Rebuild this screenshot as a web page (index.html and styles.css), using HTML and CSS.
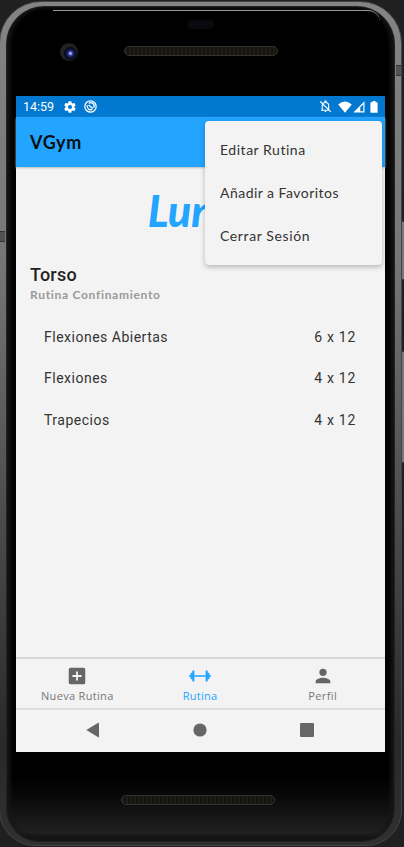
FILE: index.html
```html
<!DOCTYPE html>
<html lang="es">
<head>
<meta charset="utf-8">
<title>VGym</title>
<link rel="stylesheet" href="styles.css">
</head>
<body>
<div class="stage">
  <i class="side-key power"></i>
  <i class="side-key volume"></i>
  <div class="phone">
    <div class="bezel">
      <i class="rim-light"></i>
      <div class="forehead">
        <i class="sensor"></i>
        <i class="camera"></i>
        <i class="speaker"></i>
      </div>
      <div class="screen">
        <div class="statusbar">
          <span class="clock">14:59</span>
          <svg class="gear" width="14" height="14" viewBox="0 0 24 24"><path fill="#fff" d="M19.4 13a7.500 7.500 0 0 0 0-2l2.100-1.600a.5.5 0 0 0 .1-.6l-2-3.500a.5.5 0 0 0-.6-.2l-2.500 1a7.300 7.300 0 0 0-1.700-1l-.4-2.600a.5.5 0 0 0-.5-.5h-4a.5.5 0 0 0-.5.5L9 5.100a7.700 7.700 0 0 0-1.700 1l-2.500-1a.5.5 0 0 0-.6.200l-2 3.500a.5.5 0 0 0 .1.600L4.500 11a7.900 7.900 0 0 0 0 2l-2.200 1.600a.5.5 0 0 0-.1.600l2 3.500c.1.200.4.300.6.200l2.500-1a7.300 7.300 0 0 0 1.700 1l.4 2.600c0 .3.200.5.500.5h4c.3 0 .5-.2.5-.5l.4-2.600a7.700 7.700 0 0 0 1.700-1l2.500 1c.2.100.5 0 .6-.2l2-3.500a.5.500 0 0 0-.1-.6zM12 15.500a3.500 3.500 0 1 1 0-7 3.500 3.500 0 0 1 0 7z"/></svg>
          <svg class="sync" width="13" height="13" viewBox="0 0 13 13" fill="none" stroke="#fff"><circle cx="6.500" cy="6.500" r="5.700" stroke-width="1.200"/><path stroke-width="1.300" d="M3.300 5.200a3.400 3.400 0 0 0 5 4M9.700 7.800a3.400 3.400 0 0 0-5-4.400"/><path stroke-width="1.500" d="M4.600 5 8.800 8.500"/></svg>
          <span class="grow"></span>
          <svg class="bell" width="13" height="13" viewBox="0 0 13 13" fill="none" stroke="#fff" stroke-width="1.100"><path d="M3.300 10V5.700Q3.300 2.500 6.500 2.500T9.700 5.700V10M2 10.200h9M1.300 1.500l10.500 10.300"/><path fill="#fff" d="M6 1h1v1H6zM5.800 11.500h1.400"/></svg>
          <svg class="wifi" width="14" height="12" viewBox="0 0 14 12"><path fill="#fff" d="M.2 3.500Q7-2.500 13.800 3.500L7 11.700z"/></svg>
          <svg class="signal" width="12" height="12" viewBox="0 0 12 12"><path fill="#fff" fill-rule="evenodd" d="M11.500.3v11.200H.3zM10.300 3.200 7.300 6.200v4.100h3z"/></svg>
          <svg class="battery" width="8" height="12" viewBox="0 0 8 12"><path fill="#fff" d="M2.500 0h3v1.200H7q.6 0 .6.600v9.400q0 .6-.6.600H1q-.6 0-.6-.6V1.800q0-.6.6-.6h1.500z"/></svg>
        </div>
        <header class="appbar">VGym</header>
        <main class="content">
          <h1 class="day">Lunes</h1>
          <h2 class="group">Torso</h2>
          <p class="routine">Rutina Confinamiento</p>
          <ul class="exercises">
            <li><span>Flexiones Abiertas</span><span>6 x 12</span></li>
            <li><span>Flexiones</span><span>4 x 12</span></li>
            <li><span>Trapecios</span><span>4 x 12</span></li>
          </ul>
        </main>
        <nav class="tabs">
          <a class="tab"><svg width="22" height="22" viewBox="0 0 24 24"><path fill="#666" fill-rule="evenodd" d="M19 3H5a2 2 0 0 0-2 2v14a2 2 0 0 0 2 2h14a2 2 0 0 0 2-2V5a2 2 0 0 0-2-2zm-2 10h-4v4h-2v-4H7v-2h4V7h2v4h4z"/></svg><span class="label-new">Nueva Rutina</span></a>
          <a class="tab active"><svg width="22" height="22" viewBox="0 0 22 22"><path fill="#22a4ff" d="M0 10.300h1.500V8.500q0-.8.800-.8h1V6.200q0-.7.700-.7h.7q.7 0 .7.700v4.100h11.200V6.200q0-.7.700-.7h.7q.7 0 .7.700v1.500h1q.8 0 .8.800v1.800H22v1.400h-1.500v1.800q0 .8-.8.800h-1v1.500q0 .7-.7.700h-.7q-.7 0-.7-.7v-4.100H5.400v4.100q0 .7-.7.700H4q-.7 0-.7-.7v-1.500h-1q-.8 0-.8-.8v-1.800H0z"/></svg><span class="label-routine">Rutina</span></a>
          <a class="tab"><svg width="22" height="22" viewBox="0 0 24 24"><path fill="#666" d="M12 12a4 4 0 1 0 0-8 4 4 0 0 0 0 8zm0 2c-2.700 0-8 1.300-8 4v2h16v-2c0-2.700-5.300-4-8-4z"/></svg><span class="label-profile">Perfil</span></a>
        </nav>
        <div class="system-nav">
          <svg width="14" height="16" viewBox="0 0 14 16"><path fill="#666" d="M.3 8 12.300.8q.7-.3.700.5v13.400q0 .8-.7.500z"/></svg>
          <svg width="14" height="14" viewBox="0 0 14 14"><circle cx="7" cy="7" r="6.600" fill="#666"/></svg>
          <svg width="14" height="14" viewBox="0 0 14 14"><rect width="14" height="14" rx="1" fill="#666"/></svg>
        </div>
        <div class="menu">
          <span class="edit">Editar Rutina</span>
          <span class="favorite">Añadir a Favoritos</span>
          <span class="logout">Cerrar Sesión</span>
        </div>
      </div>
      <div class="chin"><i class="speaker"></i></div>
    </div>
  </div>
</div>
</body>
</html>
```
FILE: styles.css
```css
* { box-sizing: border-box; }
body { margin: 0; background: #202020; font-family: Roboto, sans-serif; }
.stage { position: relative; width: 404px; height: 847px; overflow: hidden; background: #202020; }
.side-key { position: absolute; right: 0; width: 3px; background: #777; border: 1px solid #3b3b3b; border-right: 0; }
.power { top: 221px; height: 59px; }
.volume { top: 351px; height: 112px; }
.phone {
  position: relative; width: 403px; height: 845px; margin: 1px 0 0 -1px; padding: 4px 6px 3px;
  border-radius: 42px 42px 36px 36px;
  background: linear-gradient(#858383, #777 30%, #4d4d4d 60%, #292929 88%, #303030);
  border: 1px solid #444;
}
.phone::before, .phone::after {
  content: ""; position: absolute; width: 5px; height: 9px; background: #525252;
  border: solid #333; border-width: 1px 0;
}
.phone::before { left: 0; top: 229px; }
.phone::after { right: 0; top: 63px; }
.bezel {
  position: relative; height: 836px; padding: 0 10px;
  border-radius: 38px 38px 33px 33px; border: 1px solid #222;
  background: linear-gradient(#000 0, #000 770px, #090909 790px, #202020 825px, #101010);
  box-shadow: inset 3px 0 4px #181818, inset -3px 0 4px #181818;
}
.rim-light {
  position: absolute; left: 46px; right: 14px; top: 3px; height: 12px;
  border-top: 1px solid #929e9e; border-radius: 0 22px 0 0;
}
.forehead { position: relative; height: 89px; }
.speaker {
  position: absolute; width: 154px; height: 10px; border: 1px solid #34332e; border-radius: 5px;
  background: repeating-linear-gradient(90deg, #1f1d18 0 2px, #14130f 2px 4px);
}
.forehead .speaker { left: 107px; top: 39px; }
.camera {
  position: absolute; left: 43px; top: 36px; width: 18px; height: 18px; border-radius: 50%;
  background: radial-gradient(circle at 58% 58%, #9dacef 0 1px, #3543a5 2px, #10133e 4px, #0b0c17 6px, #222 7px);
}
.sensor { position: absolute; left: 170px; top: 13px; width: 27px; height: 9px; border-radius: 5px; background: #090a0f; }
.screen {
  position: relative; width: 369px; height: 656px; margin-left: -1px;
  display: flex; flex-direction: column; background: #f3f3f3; color: #222;
}
.statusbar { height: 21px; padding: 0 7px 0 7px; display: flex; align-items: center; background: #0278d0; color: #fff; }
.clock { width: 32px; font-size: 12.5px; line-height: 21px; white-space: nowrap; }
.gear { margin-left: 8px; }
.sync { margin-left: 7px; }
.grow { flex: 1; }
.wifi { margin-left: 6px; }
.signal { margin-left: 1px; }
.battery { margin-left: 5px; }
.appbar {
  height: 50px; padding-left: 14px; background: #22a4ff; color: #0b1015;
  font: 700 18px/51px Lato, sans-serif; letter-spacing: .6px; box-shadow: 0 1px 2px #bbb;
}
.content { flex: 1; padding: 19px 14px 0; }
.day { margin: 0; text-align: center; font: italic 900 43px/49px Lato, sans-serif; color: #22a4ff; }
.group { margin: 28px 0 0; font: 500 18px/24px Roboto, sans-serif; letter-spacing: .2px; color: #222; }
.routine { margin: 0; font: 700 12px/15px Lato, sans-serif; letter-spacing: .7px; color: #999; }
.exercises { list-style: none; margin: 14px 0 0; padding: 0 14px; }
.exercises li { display: flex; justify-content: space-between; height: 41.4px; line-height: 42px; font-size: 14px; letter-spacing: .5px; color: #333; }
.exercises li span:last-child { padding-right: 1px; letter-spacing: .7px; }
.tabs {
  height: 53px; padding-right: 1px; display: grid; grid-template-columns: repeat(3, 1fr); border-top: 2px solid #d9d9d9; border-bottom: 2px solid #dedede;
}
.tab { display: flex; flex-direction: column; align-items: center; padding-top: 6px; color: #777; font: 11px/15px "Open Sans", sans-serif; white-space: nowrap; }
.tab span { margin-top: 1px; }
.tab.active { color: #22a4ff; }
.label-new { letter-spacing: .32px; }
.label-routine { letter-spacing: .25px; }
.label-profile { letter-spacing: .4px; }
.system-nav { height: 42px; padding: 0 71px 2px 70px; display: flex; align-items: center; justify-content: space-between; }
.menu {
  position: absolute; left: 189px; top: 25px; width: 177px; height: 144px; padding: 7px 15px;
  display: flex; flex-direction: column; background: #f3f3f3; border-radius: 4px; box-shadow: 0 2px 5px rgba(0,0,0,.25);
  font: 14px/43px Lato, sans-serif; color: #333;
}
.menu span { height: 43px; white-space: nowrap; }
.edit { letter-spacing: .53px; }
.favorite { letter-spacing: .47px; }
.logout { letter-spacing: .62px; }
.chin { position: relative; height: 80px; }
.chin .speaker { left: 104px; top: 43px; }
```
